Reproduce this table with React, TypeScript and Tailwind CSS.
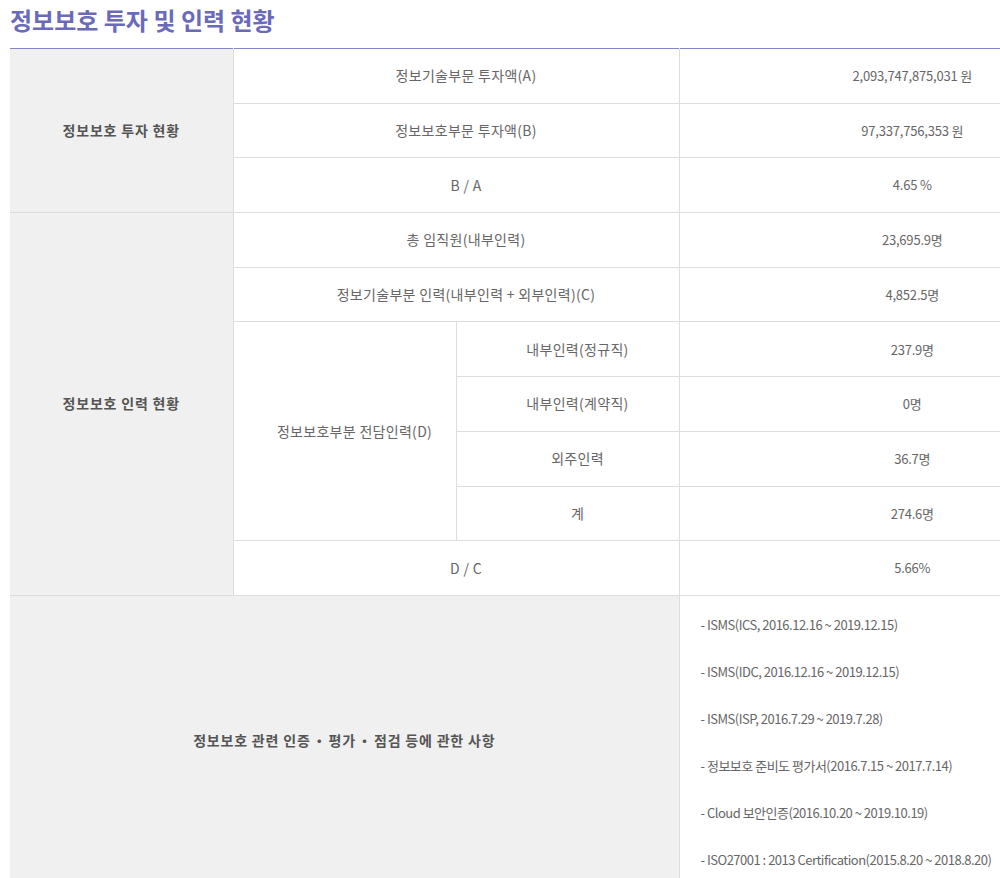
import React from "react";

const font = { fontFamily: '"Noto Sans CJK KR", "Noto Sans", sans-serif' };

function Dot() {
  return <span className="inline-block w-[18px] text-center">・</span>;
}

export default function App() {
  const td = "border border-[#dddddd] pl-[20px] text-center align-middle text-[14px] text-[#666666] h-[54.7px] font-normal tracking-[0.3px]";
  const tv = "border border-[#dddddd] border-r-0 pl-[20px] text-center align-middle text-[13px] text-[#666666] h-[54.7px] font-normal tracking-[-0.2px]";
  const th = "border border-[#dddddd] border-l-0 bg-[#f0f0f0] text-center align-middle text-[14px] text-[#555555] font-bold tracking-[0.8px]";
  const certs = [
    "- ISMS(ICS, 2016.12.16 ~ 2019.12.15)",
    "- ISMS(IDC, 2016.12.16 ~ 2019.12.15)",
    "- ISMS(ISP, 2016.7.29 ~ 2019.7.28)",
    "- 정보보호 준비도 평가서(2016.7.15 ~ 2017.7.14)",
    "- Cloud 보안인증(2016.10.20 ~ 2019.10.19)",
    "- ISO27001 : 2013 Certification(2015.8.20 ~ 2018.8.20)",
  ];
  return (
    <div className="w-[1000px] h-[878px] overflow-hidden bg-white" style={font}>
      <h1 className="pl-[10px] text-[24px] leading-[40px] font-bold text-[#6a6ab9]">
        정보보호 투자 및 인력 현황
      </h1>
      <div className="pl-[10px] pt-[8px]">
        <table className="border-collapse table-fixed w-[1115px] border-t border-t-[#8585c4]">
          <colgroup>
            <col className="w-[223px]" />
            <col className="w-[223px]" />
            <col className="w-[223px]" />
            <col className="w-[446px]" />
          </colgroup>
          <tbody>
            <tr>
              <th rowSpan={3} className={th + " border-t-[#8585c4]"}>정보보호 투자 현황</th>
              <td colSpan={2} className={td + " border-t-[#8585c4]"}>정보기술부문 투자액(A)</td>
              <td className={tv + " border-t-[#8585c4]"}>2,093,747,875,031 원</td>
            </tr>
            <tr>
              <td colSpan={2} className={td}>정보보호부문 투자액(B)</td>
              <td className={tv}>97,337,756,353 원</td>
            </tr>
            <tr>
              <td colSpan={2} className={td}>B / A</td>
              <td className={tv}>4.65 %</td>
            </tr>
            <tr>
              <th rowSpan={7} className={th}>정보보호 인력 현황</th>
              <td colSpan={2} className={td}>총 임직원(내부인력)</td>
              <td className={tv}>23,695.9명</td>
            </tr>
            <tr>
              <td colSpan={2} className={td}>정보기술부분 인력(내부인력 + 외부인력)(C)</td>
              <td className={tv}>4,852.5명</td>
            </tr>
            <tr>
              <td rowSpan={4} className={td}>정보보호부분 전담인력(D)</td>
              <td className={td}>내부인력(정규직)</td>
              <td className={tv}>237.9명</td>
            </tr>
            <tr>
              <td className={td}>내부인력(계약직)</td>
              <td className={tv}>0명</td>
            </tr>
            <tr>
              <td className={td}>외주인력</td>
              <td className={tv}>36.7명</td>
            </tr>
            <tr>
              <td className={td}>계</td>
              <td className={tv}>274.6명</td>
            </tr>
            <tr>
              <td colSpan={2} className={td}>D / C</td>
              <td className={tv}>5.66%</td>
            </tr>
            <tr>
              <th colSpan={3} className={th}>
                정보보호 관련 인증<Dot />평가<Dot />점검 등에 관한 사항
              </th>
              <td className="border border-[#dddddd] border-r-0 text-left align-top pl-[21px] pt-[5px] pb-[3px] text-[13px] text-[#666666] tracking-[-0.5px]">
                {certs.map((c) => (
                  <div key={c} className="leading-[47px] whitespace-nowrap">{c}</div>
                ))}
              </td>
            </tr>
          </tbody>
        </table>
      </div>
    </div>
  );
}
